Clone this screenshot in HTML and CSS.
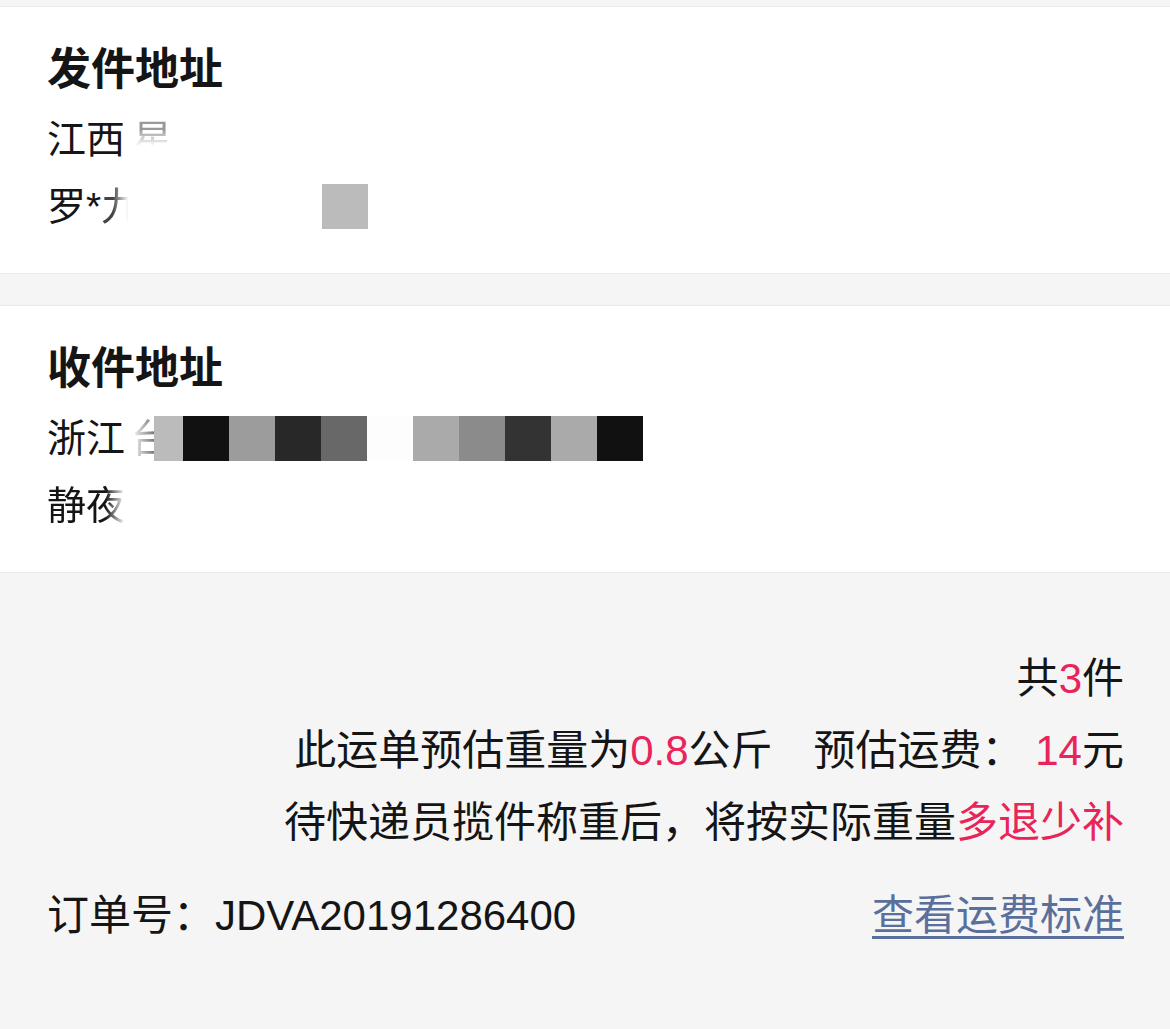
FILE: index.html
```html
<!DOCTYPE html>
<html lang="zh-CN">
<head>
    <meta charset="UTF-8">
    <meta name="viewport" content="width=device-width, initial-scale=1.0">
    <title>订单详情</title>
    <link rel="stylesheet" href="styles.css">
</head>
<body>

<div class="page">
    <!-- Sender -->
    <div class="card">
        <h2>发件地址</h2>
        <p>江西<span class="fade fade-down">星</span></p>
        <p>罗*<span class="fade fade-right">九</span><span class="gap"></span><span class="pix p-b"></span></p>
    </div>

    <!-- Receiver -->
    <div class="card">
        <h2>收件地址</h2>
        <p>浙江<span class="fade fade-left">台</span><span class="mosaic">
            <span class="pix p-half p-b"></span><span class="pix p-k"></span><span class="pix p-9"></span><span class="pix p-2"></span><span class="pix p-6"></span><span class="pix p-w"></span><span class="pix p-a"></span><span class="pix p-8"></span><span class="pix p-3"></span><span class="pix p-a"></span><span class="pix p-k"></span>
        </span></p>
        <p><span class="fade-tail">静夜</span></p>
    </div>

    <!-- Summary -->
    <div class="summary">
        <div class="right">共<em>3</em>件</div>
        <div class="right">此运单预估重量为<em>0.8</em>公斤<span class="sp"></span>预估运费： <em>14</em>元</div>
        <div class="right">待快递员揽件称重后，将按实际重量<em>多退少补</em></div>
        <div class="order">
            <span>订单号：JDVA20191286400</span>
            <a href="#">查看运费标准</a>
        </div>
    </div>
</div>

</body>
</html>
```

FILE: styles.css
```css
body {
    font-family: "Liberation Sans", "Noto Sans CJK SC", sans-serif;
    background-color: #f5f5f5;
    color: #151515;
    margin: 0;
    padding-top: 6px;
}
.card {
    background: #fff;
    border-top: 1px solid #e9e9e9;
    border-bottom: 1px solid #e9e9e9;
    padding: 33px 47px 33px;
    margin-bottom: 31px;
}
.card h2 {
    margin: 0 0 6px;
    font-size: 44px;
    line-height: 60px;
    font-weight: bold;
}
.card p {
    margin: 0;
    font-size: 39px;
    line-height: 67px;
    display: flex;
    align-items: center;
}
.fade {
    display: inline-block;
    color: #999;
}
.fade-down {
    margin-left: 8px;
    -webkit-mask-image: linear-gradient(180deg, #000 35%, transparent 60%);
    mask-image: linear-gradient(180deg, #000 35%, transparent 60%);
}
.fade-right {
    color: #444;
    -webkit-mask-image: linear-gradient(90deg, #000 30%, transparent 70%);
    mask-image: linear-gradient(90deg, #000 30%, transparent 70%);
}
.fade-left {
    color: #777;
    margin-left: 6px;
    width: 23px;
    overflow: hidden;
    -webkit-mask-image: linear-gradient(90deg, transparent 0%, #000 100%);
    mask-image: linear-gradient(90deg, transparent 0%, #000 100%);
}
.fade-tail {
    -webkit-mask-image: linear-gradient(90deg, #000 75%, transparent 100%);
    mask-image: linear-gradient(90deg, #000 75%, transparent 100%);
}
.gap {
    width: 182px;
}
.mosaic {
    display: flex;
}
.pix {
    display: inline-block;
    width: 46px;
    height: 45px;
}
.p-half { width: 29px; }
.p-b { background: #bbbbbb; }
.p-k { background: #111111; }
.p-9 { background: #9c9c9c; }
.p-2 { background: #282828; }
.p-6 { background: #686868; }
.p-w { background: #fdfdfd; }
.p-a { background: #aaaaaa; }
.p-8 { background: #8b8b8b; }
.p-3 { background: #333333; }
.summary {
    margin-top: -31px;
    padding: 70px 46px 40px 47px;
    font-size: 42px;
}
.summary em {
    font-style: normal;
    color: #e8245a;
}
.right {
    text-align: right;
    line-height: 72px;
}
.sp {
    display: inline-block;
    width: 41px;
}
.order {
    display: flex;
    justify-content: space-between;
    margin-top: 27px;
    line-height: 60px;
    font-size: 42px;
}
.order a {
    color: #5a6f9b;
    text-decoration: underline;
    text-underline-offset: 6px;
    text-decoration-thickness: 3px;
}
```
